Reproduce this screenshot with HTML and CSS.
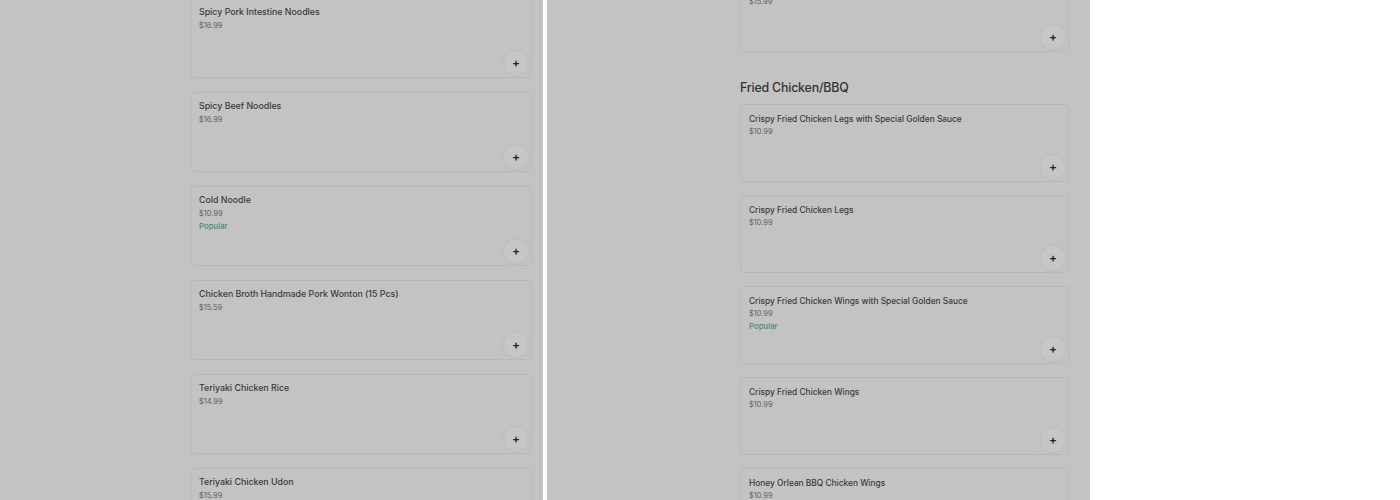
FILE: index.html
```html
<!DOCTYPE html>
<html>
<head>
<meta charset="utf-8">
<link rel="stylesheet" href="styles.css">
</head>
<body>
<div class="screen">
  <section class="panel panel-left">
    <div class="list list-left">
      <div class="card">
        <div class="title">Spicy Pork Intestine Noodles</div>
        <div class="price">$16.99</div>
        <button class="add">+</button>
      </div>
      <div class="card">
        <div class="title">Spicy Beef Noodles</div>
        <div class="price">$16.99</div>
        <button class="add">+</button>
      </div>
      <div class="card">
        <div class="title">Cold Noodle</div>
        <div class="price">$10.99</div>
        <div class="popular">Popular</div>
        <button class="add">+</button>
      </div>
      <div class="card">
        <div class="title">Chicken Broth Handmade Pork Wonton (15 Pcs)</div>
        <div class="price">$15.59</div>
        <button class="add">+</button>
      </div>
      <div class="card">
        <div class="title">Teriyaki Chicken Rice</div>
        <div class="price">$14.99</div>
        <button class="add">+</button>
      </div>
      <div class="card">
        <div class="title">Teriyaki Chicken Udon</div>
        <div class="price">$15.99</div>
        <button class="add">+</button>
      </div>
    </div>
    <div class="track"></div>
  </section>
  <div class="divider"></div>
  <section class="panel panel-right">
    <div class="list list-right">
      <div class="card card-r">
        <div class="title">Teriyaki Beef Udon</div>
        <div class="price">$15.99</div>
        <button class="add">+</button>
      </div>
      <h2 class="heading">Fried Chicken/BBQ</h2>
      <div class="card card-r">
        <div class="title">Crispy Fried Chicken Legs with Special Golden Sauce</div>
        <div class="price">$10.99</div>
        <button class="add">+</button>
      </div>
      <div class="card card-r">
        <div class="title">Crispy Fried Chicken Legs</div>
        <div class="price">$10.99</div>
        <button class="add">+</button>
      </div>
      <div class="card card-r">
        <div class="title">Crispy Fried Chicken Wings with Special Golden Sauce</div>
        <div class="price">$10.99</div>
        <div class="popular">Popular</div>
        <button class="add">+</button>
      </div>
      <div class="card card-r">
        <div class="title">Crispy Fried Chicken Wings</div>
        <div class="price">$10.99</div>
        <button class="add">+</button>
      </div>
      <div class="card card-r">
        <div class="title">Honey Orlean BBQ Chicken Wings</div>
        <div class="price">$10.99</div>
        <button class="add">+</button>
      </div>
    </div>
  </section>
  <div class="blank"></div>
</div>
</body>
</html>
```
FILE: styles.css
```css
* { box-sizing: border-box; }
html, body { margin: 0; padding: 0; }
body {
  width: 1400px;
  height: 500px;
  overflow: hidden;
  background: #ffffff;
  font-family: Inter, "Noto Sans", sans-serif;
}
.screen {
  display: flex;
  height: 500px;
}
.panel {
  background: #c3c3c3;
  height: 500px;
  overflow: hidden;
  display: flex;
}
.panel-left { width: 543px; }
.panel-right { width: 543px; }
.divider { width: 4px; background: #ffffff; }
.blank { flex: 1; background: #ffffff; }
.track {
  width: 2px;
  margin-left: 7px;
  background: #bdbdbd;
}
.list {
  display: flex;
  flex-direction: column;
}
.list-left {
  margin-left: 190px;
  width: 342px;
  margin-top: -2px;
  gap: 14px;
}
.list-right {
  margin-left: 193px;
  width: 329px;
  margin-top: -26px;
  gap: 13px;
}
.card {
  position: relative;
  flex: none;
  height: 80px;
  border: 1px solid #b9b9b9;
  border-radius: 4px;
  padding: 7px 8px;
  background: #c3c3c3;
}
.card-r { height: 78px; padding-top: 8px; }
.title {
  font-size: 8.8px;
  font-weight: 500;
  color: #3a3a3a;
  line-height: 12px;
}
.card-r .title { font-size: 8.35px; }
.price {
  margin-top: 3px;
  font-size: 7.4px;
  color: #5e5e5e;
  line-height: 10px;
}
.card-r .price { margin-top: 2px; }
.popular {
  margin-top: 2px;
  font-size: 7.8px;
  font-weight: 500;
  color: #4c8a68;
  line-height: 10px;
}
.add {
  position: absolute;
  right: 3px;
  bottom: 2px;
  width: 24px;
  height: 24px;
  border-radius: 50%;
  border: none;
  padding: 0;
  background: #c6c6c6;
  box-shadow: 0 0 3px 1px #bcbcbc;
  color: #222;
  font-family: Inter, sans-serif;
  font-size: 12px;
  font-weight: 600;
  line-height: 24px;
  text-align: center;
}
.card-r .add { bottom: 2px; }
.heading {
  margin: 14px 0 -5px 0;
  font-size: 12.4px;
  font-weight: 500;
  color: #333;
  line-height: 17px;
  letter-spacing: -0.2px;
}
```
